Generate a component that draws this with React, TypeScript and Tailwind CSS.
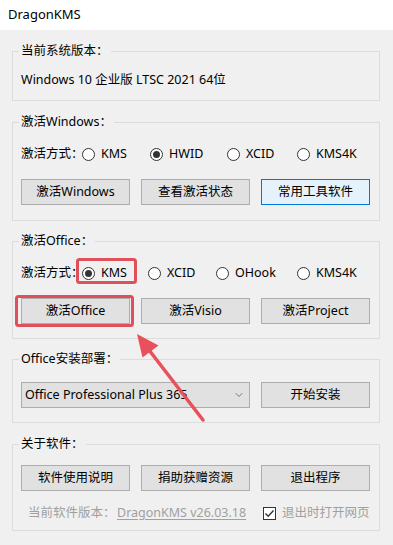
import { ChevronDown } from 'lucide-react';

const FONT = "font-['Segoe_UI','Noto_Sans','Noto_Sans_CJK_SC',sans-serif]";

function Group({ title, className, children }: { title: string; className?: string; children: React.ReactNode }) {
  return (
    <fieldset className={`border border-[#dcdcdc] mx-0 ${className ?? ''}`}>
      <legend className="ml-[6px] px-[2px] text-[12.5px] leading-[18px]">{title}</legend>
      {children}
    </fieldset>
  );
}

function Radio({ label, checked, width }: { label: string; checked?: boolean; width: string }) {
  return (
    <div className={`flex items-center gap-[6px] shrink-0 ${width}`}>
      <span className="w-[13px] h-[13px] shrink-0 rounded-full border border-[#333] bg-white flex items-center justify-center">
        {checked && <span className="w-[7px] h-[7px] rounded-full bg-[#333]" />}
      </span>
      <span>{label}</span>
    </div>
  );
}

function Btn({ children, active }: { children: React.ReactNode; active?: boolean }) {
  return (
    <button
      className={`h-[26px] text-[12.5px] leading-none border whitespace-nowrap ${
        active ? 'bg-[#e5f1fb] border-[#0078d7]' : 'bg-[#e1e1e1] border-[#adadad]'
      }`}
    >
      {children}
    </button>
  );
}

export default function App() {
  return (
    <div className={`relative w-[393px] h-[545px] bg-[#f0f0f0] text-black text-[12.5px] whitespace-nowrap overflow-hidden ${FONT}`}>
      {/* title bar */}
      <div className="h-[30px] bg-white flex items-center pl-[8px] text-[13px]">DragonKMS</div>

      <div className="pl-[12px] pr-[13px] flex flex-col">
        <Group title="当前系统版本：" className="mt-[12px]">
          <div className="pl-[8px] pt-[11px] pb-[11px] leading-[18px]">Windows 10 企业版 LTSC 2021 64位</div>
        </Group>

        <Group title="激活Windows：" className="mt-[12px]">
          <div className="pl-[8px] pr-[9px] pt-[14px] pb-[15px]">
            <div className="flex items-center h-[18px]">
              <span className="w-[61px] shrink-0">激活方式：</span>
              <Radio label="KMS" width="w-[68px]" />
              <Radio label="HWID" checked width="w-[77px]" />
              <Radio label="XCID" width="w-[70px]" />
              <Radio label="KMS4K" width="w-[70px]" />
            </div>
            <div className="grid grid-cols-3 gap-x-[11px] mt-[16px]">
              <Btn>激活Windows</Btn>
              <Btn>查看激活状态</Btn>
              <Btn active>常用工具软件</Btn>
            </div>
          </div>
        </Group>

        <Group title="激活Office：" className="mt-[11px]">
          <div className="pl-[8px] pr-[9px] pt-[14px] pb-[14px]">
            <div className="flex items-center h-[18px]">
              <span className="w-[61px] shrink-0">激活方式：</span>
              <Radio label="KMS" checked width="w-[66px]" />
              <Radio label="XCID" width="w-[68px]" />
              <Radio label="OHook" width="w-[81px]" />
              <Radio label="KMS4K" width="w-[70px]" />
            </div>
            <div className="grid grid-cols-3 gap-x-[11px] mt-[16px]">
              <Btn>激活Office</Btn>
              <Btn>激活Visio</Btn>
              <Btn>激活Project</Btn>
            </div>
          </div>
        </Group>

        <Group title="Office安装部署：" className="mt-[11px]">
          <div className="pl-[8px] pr-[9px] pt-[14px] pb-[14px] flex gap-x-[11px]">
            <div className="w-[229px] shrink-0 h-[26px] bg-[#e1e1e1] border border-[#adadad] flex items-center justify-between pl-[3px] pr-[4px]">
              <span>Office Professional Plus 365</span>
              <ChevronDown size={12} strokeWidth={1.5} className="text-[#555]" />
            </div>
            <div className="flex-1 grid">
              <Btn>开始安装</Btn>
            </div>
          </div>
        </Group>

        <Group title="关于软件：" className="mt-[12px]">
          <div className="pl-[8px] pr-[9px] pt-[12px] pb-[8px]">
            <div className="grid grid-cols-3 gap-x-[11px]">
              <Btn>软件使用说明</Btn>
              <Btn>捐助获赠资源</Btn>
              <Btn>退出程序</Btn>
            </div>
            <div className="flex items-center h-[18px] mt-[13px] text-[#a0a0a0]">
              <span className="ml-[7px] w-[89px] shrink-0">当前软件版本：</span>
              <span className="underline underline-offset-2 w-[146px] shrink-0">DragonKMS v26.03.18</span>
              <span className="w-[13px] h-[13px] shrink-0 border border-[#333] bg-white flex items-center justify-center">
                <svg width="11" height="11" viewBox="0 0 11 11">
                  <path d="M1.5 5.5 L4.2 8.2 L9.5 2.5" fill="none" stroke="#333" strokeWidth="1.4" />
                </svg>
              </span>
              <span className="ml-[6px]">退出时打开网页</span>
            </div>
          </div>
        </Group>
      </div>

      {/* annotation overlay */}
      <svg className="absolute inset-0 pointer-events-none" width="393" height="545" viewBox="0 0 393 545">
        <rect x="77.5" y="259.5" width="58" height="23" rx="2" fill="none" stroke="#e0505a" strokeWidth="3" />
        <rect x="16.5" y="296.5" width="116" height="29" rx="2" fill="none" stroke="#e0505a" strokeWidth="3" />
        <path d="M203 420 L149 350" stroke="#e8505b" strokeWidth="3.5" strokeLinecap="round" />
        <path d="M137 334 L158.5 345.5 L142.5 357.5 Z" fill="#e8505b" />
      </svg>
    </div>
  );
}
